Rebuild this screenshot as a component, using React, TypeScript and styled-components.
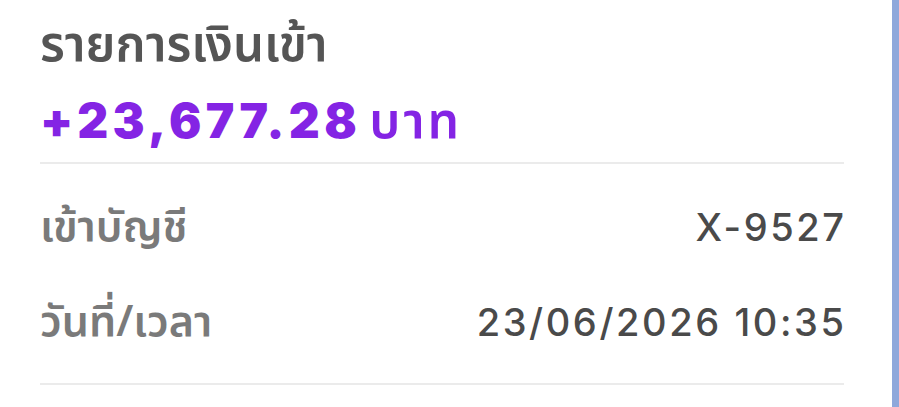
import React from "react";
import styled, { createGlobalStyle } from "styled-components";

const Global = createGlobalStyle`
  html, body { margin: 0; padding: 0; background: #ffffff; }
  body { font-family: Inter, "Noto Sans Thai", "Noto Sans", sans-serif; }
`;

const Page = styled.div`
  display: flex;
  width: 899px;
  height: 407px;
  overflow: hidden;
  background: #ffffff;
`;

const Card = styled.div`
  flex: 1;
  display: flex;
  flex-direction: column;
  padding: 20px 48px 0 40px;
`;

const SideBar = styled.div`
  width: 7px;
  background: #8fa8db;
`;

const Title = styled.div`
  font-family: "Noto Sans Thai", "Noto Sans", sans-serif;
  font-size: 49px;
  font-weight: 600;
  color: #555555;
  line-height: 52px;
`;

const Amount = styled.div`
  display: flex;
  align-items: baseline;
  gap: 12px;
  color: #8424e4;
  margin-top: 23px;
  line-height: 52px;
  padding-bottom: 13px;
  border-bottom: 2px solid #ebebeb;
`;

const Number = styled.span`
  font-family: Inter, sans-serif;
  font-size: 48px;
  font-weight: 900;
  letter-spacing: 4.4px;
  margin-right: -4px;
`;

const Unit = styled.span`
  font-family: "Noto Sans Thai", "Noto Sans", sans-serif;
  font-size: 50px;
  font-weight: 600;
  letter-spacing: 3px;
`;

const Rows = styled.div`
  display: flex;
  flex-direction: column;
  padding-top: 38px;
  padding-bottom: 35px;
  gap: 44px;
  border-bottom: 2px solid #ebebeb;
`;

const Row = styled.div`
  display: flex;
  justify-content: space-between;
  align-items: baseline;
  line-height: 50px;
`;

const Label = styled.span`
  font-family: "Noto Sans Thai", "Noto Sans", sans-serif;
  font-size: 43px;
  font-weight: 600;
  color: #7a7a7a;
`;

const Value = styled.span`
  font-family: Inter, sans-serif;
  font-size: 38px;
  font-weight: 500;
  letter-spacing: 2.6px;
  margin-right: -2.6px;
  color: #4a4a4a;
`;

export default function App() {
  return (
    <>
      <Global />
      <Page>
        <Card>
          <Title>รายการเงินเข้า</Title>
          <Amount>
            <Number>+23,677.28</Number>
            <Unit>บาท</Unit>
          </Amount>
          <Rows>
            <Row>
              <Label>เข้าบัญชี</Label>
              <Value>X-9527</Value>
            </Row>
            <Row>
              <Label>วันที่/เวลา</Label>
              <Value>23/06/2026 10:35</Value>
            </Row>
          </Rows>
        </Card>
        <SideBar />
      </Page>
    </>
  );
}
